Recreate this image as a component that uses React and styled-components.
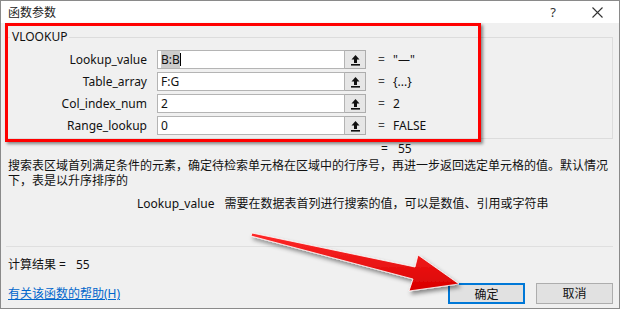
import React from 'react'
import styled, { createGlobalStyle } from 'styled-components'

const args = [
    { name: 'Lookup_value', value: 'B:B', result: '"—"', selected: true },
    { name: 'Table_array', value: 'F:G', result: '{...}' },
    { name: 'Col_index_num', value: '2', result: '2' },
    { name: 'Range_lookup', value: '0', result: 'FALSE' },
]

const RefIcon = () => (
    <svg width="11" height="12" viewBox="0 0 11 12">
        <path d="M5.5 1 L9.5 5.5 L7 5.5 L7 9 L4 9 L4 5.5 L1.5 5.5 Z" fill="#111" />
        <rect x="1" y="10" width="9" height="1.6" fill="#111" />
    </svg>
)

const CloseIcon = () => (
    <svg width="11" height="11" viewBox="0 0 11 11">
        <path d="M0.5 0.5 L10.5 10.5 M10.5 0.5 L0.5 10.5" stroke="#333" strokeWidth="1.1" />
    </svg>
)

const Arrow = () => (
    <ArrowLayer width="620" height="309" viewBox="0 0 620 309">
        <defs>
            <linearGradient id="arrowFill" x1="0" y1="0" x2="0" y2="1">
                <stop offset="0" stopColor="#ff2a2a" />
                <stop offset="1" stopColor="#d80000" />
            </linearGradient>
            <filter id="arrowShadow" x="-10%" y="-30%" width="130%" height="170%">
                <feDropShadow dx="2" dy="3" stdDeviation="2" floodColor="#000" floodOpacity="0.45" />
            </filter>
        </defs>
        <path
            d="M252 233 L415 267 L418 255 L459 284 L409 291 L413 279 L251 236 Z"
            fill="url(#arrowFill)"
            stroke="#fff"
            strokeWidth="0.8"
            strokeLinejoin="round"
            filter="url(#arrowShadow)"
        />
    </ArrowLayer>
)

const App = () => {
    return (
        <>
            <GlobalStyle />
            <Window>
                <TitleBar>
                    <span>函数参数</span>
                    <TitleTools>
                        <span className="help">?</span>
                        <CloseIcon />
                    </TitleTools>
                </TitleBar>
                <Body>
                    <Group>
                        <legend>VLOOKUP</legend>
                        <ArgGrid>
                            {args.map((a) => (
                                <React.Fragment key={a.name}>
                                    <ArgName>{a.name}</ArgName>
                                    <Field>
                                        {a.selected ? (
                                            <>
                                                <span className="sel">{a.value}</span>
                                                <span className="caret" />
                                            </>
                                        ) : a.value}
                                    </Field>
                                    <RefButton><RefIcon /></RefButton>
                                    <Eq>=</Eq>
                                    <ArgResult>{a.result}</ArgResult>
                                </React.Fragment>
                            ))}
                        </ArgGrid>
                    </Group>
                    <FormulaResult>
                        <span>=</span>
                        <span>55</span>
                    </FormulaResult>
                    <Description>
                        搜索表区域首列满足条件的元素，确定待检索单元格在区域中的行序号，再进一步返回选定单元格的值。默认情况下，表是以升序排序的
                    </Description>
                    <ArgHelp>
                        <span className="name">Lookup_value</span>
                        <span>需要在数据表首列进行搜索的值，可以是数值、引用或字符串</span>
                    </ArgHelp>
                    <Divider />
                    <CalcResult>
                        <span>计算结果 =</span>
                        <span>55</span>
                    </CalcResult>
                    <Footer>
                        <HelpLink href="#">有关该函数的帮助(H)</HelpLink>
                        <Buttons>
                            <Button $primary>确定</Button>
                            <Button>取消</Button>
                        </Buttons>
                    </Footer>
                </Body>
                <Highlight />
                <Arrow />
            </Window>
        </>
    )
}

const GlobalStyle = createGlobalStyle`
body{
    margin: 0;
    background: #ffffff;
    font-family: "Noto Sans", "Noto Sans CJK SC", sans-serif;
}
`

const Window = styled.div`
position: relative;
width: 620px;
height: 309px;
box-sizing: border-box;
border: 1px solid #8a8a8a;
background: #f0f0f0;
display: flex;
flex-direction: column;
overflow: hidden;
font-size: 12px;
color: #111;
`

const TitleBar = styled.div`
height: 22px;
flex-shrink: 0;
background: #ffffff;
display: flex;
align-items: center;
justify-content: space-between;
padding: 0 0 0 7px;
font-size: 12px;
color: #222;
`

const TitleTools = styled.div`
display: flex;
align-items: center;
gap: 36px;
padding-right: 16px;

.help{
    font-size: 13px;
    color: #333;
}
`

const Body = styled.div`
display: flex;
flex-direction: column;
padding: 0 6px 0 5px;
`

const Group = styled.fieldset`
margin: 7px 0 0 0;
padding: 6px 0 3px 0;
border: 1px solid #dcdcdc;
min-width: 0;

legend{
    margin-left: 3px;
    padding: 0 2px;
    font-size: 12px;
    line-height: 14px;
    color: #111;
}
`

const ArgGrid = styled.div`
display: grid;
grid-template-columns: 150px 188px 21px 27px 1fr;
grid-auto-rows: 19px;
row-gap: 3px;
align-items: center;
`

const ArgName = styled.div`
text-align: right;
padding-right: 10px;
`

const Field = styled.div`
height: 19px;
box-sizing: border-box;
border: 1px solid #b4b4b4;
background: #fff;
display: flex;
align-items: center;
padding-left: 3px;

.sel{
    background: #cccccc;
}
.caret{
    width: 1px;
    height: 13px;
    background: #000;
}
`

const RefButton = styled.div`
height: 19px;
box-sizing: border-box;
border: 1px solid #adadad;
border-left: none;
background: #e6e6e6;
display: flex;
align-items: center;
justify-content: center;
`

const Eq = styled.div`
padding-left: 12px;
color: #444;
`

const ArgResult = styled.div`
color: #111;
`

const FormulaResult = styled.div`
margin-top: 2px;
line-height: 16px;
padding-left: 375px;
display: flex;
gap: 10px;
`

const Description = styled.div`
margin-top: 1px;
padding-left: 2px;
margin-right: -4px;
line-height: 15px;
`

const ArgHelp = styled.div`
margin-top: 8px;
padding-left: 131px;
line-height: 15px;
display: flex;
gap: 10px;
`

const Divider = styled.div`
margin-top: 35px;
height: 1px;
background: #dfdfdf;
`

const CalcResult = styled.div`
margin-top: 11px;
padding-left: 2px;
line-height: 14px;
display: flex;
gap: 10px;
`

const Footer = styled.div`
margin-top: 11px;
height: 20px;
display: flex;
align-items: center;
justify-content: space-between;
padding-left: 2px;
`

const HelpLink = styled.a`
color: #0066cc;
text-decoration: underline;
`

const Buttons = styled.div`
display: flex;
gap: 11px;
`

const Button = styled.button`
width: 77px;
height: 21px;
box-sizing: border-box;
font-family: inherit;
font-size: 12px;
color: #111;
background: #e1e1e1;
border: ${(p) => (p.$primary ? '2px solid #0078d7' : '1px solid #adadad')};
padding: 0;
`

const Highlight = styled.div`
position: absolute;
left: 4px;
top: 22px;
width: 476px;
height: 119px;
box-sizing: border-box;
border: 3px solid #ff0000;
box-shadow: 2px 2px 3px rgba(0, 0, 0, 0.45);
pointer-events: none;
`

const ArrowLayer = styled.svg`
position: absolute;
left: -1px;
top: -1px;
pointer-events: none;
`

export default App
